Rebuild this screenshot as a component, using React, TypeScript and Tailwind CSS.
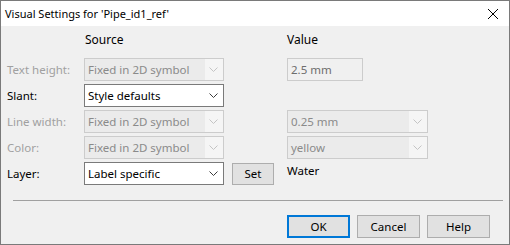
import React from 'react';

const font = "font-['Segoe_UI','Noto_Sans',sans-serif]";

function Chevron({ disabled }: { disabled?: boolean }) {
    return (
        <svg width="9" height="5" viewBox="0 0 9 5" className="shrink-0">
            <path d="M0.5 0.5 L4.5 4.5 L8.5 0.5" fill="none" stroke={disabled ? '#c4c4c4' : '#3c3c3c'} strokeWidth="1" />
        </svg>
    );
}

function Select({ value, disabled }: { value: string; disabled?: boolean }) {
    if (disabled) {
        return (
            <div className="flex h-[23px] w-full border border-[#cccccc] bg-[#f5f5f5]">
                <div className="flex flex-1 items-center bg-[#ebebeb] pl-[3px] text-[#8a8a8a]">{value}</div>
                <div className="flex w-[18px] items-center justify-center pr-[1px]">
                    <Chevron disabled />
                </div>
            </div>
        );
    }
    return (
        <div className="flex h-[23px] w-full items-center border border-[#7a7a7a] bg-white">
            <div className="flex-1 pl-[3px] text-black">{value}</div>
            <div className="flex w-[18px] items-center justify-center pr-[1px]">
                <Chevron />
            </div>
        </div>
    );
}

function Label({ text, disabled }: { text: string; disabled?: boolean }) {
    return <div className={disabled ? 'text-[#a0a0a0]' : 'text-black'}>{text}</div>;
}

function DialogButton({ label, primary }: { label: string; primary?: boolean }) {
    return (
        <button
            className={
                'flex h-[23px] w-[63px] items-center justify-center bg-[#e1e1e1] text-black ' +
                (primary ? 'border-2 border-[#0078d7]' : 'border border-[#adadad]')
            }
        >
            {label}
        </button>
    );
}

export default function App() {
    return (
        <div className={`flex h-[245px] w-[510px] flex-col border border-[#7a7a7a] bg-[#f0f0f0] text-[11.5px] leading-none ${font}`}>
            <div className="flex h-[25px] items-center justify-between bg-white pl-[4px] pr-[11px]">
                <span className="text-[11px] text-black">Visual Settings for 'Pipe_id1_ref'</span>
                <svg width="10" height="10" viewBox="0 0 10 10">
                    <path d="M0 0 L10 10 M10 0 L0 10" stroke="#000" strokeWidth="1" />
                </svg>
            </div>

            <div className="flex flex-col pl-[6px] pt-[5px]">
                <div className="grid h-[18px] grid-cols-[77px_140px_63px_141px] items-center text-[12px] text-black">
                    <div />
                    <div className="pl-[1px]">Source</div>
                    <div />
                    <div>Value</div>
                </div>

                <div className="mt-[9px] flex flex-col gap-[3px]">
                    <div className="grid h-[23px] grid-cols-[77px_140px_63px_141px] items-center">
                        <Label text="Text height:" disabled />
                        <Select value="Fixed in 2D symbol" disabled />
                        <div />
                        <div className="flex h-[23px] w-[76px] items-center border border-[#cccccc] bg-[#f0f0f0] pl-[3px] text-[#6d6d6d]">
                            2.5 mm
                        </div>
                    </div>
                    <div className="grid h-[23px] grid-cols-[77px_140px_63px_141px] items-center">
                        <Label text="Slant:" />
                        <Select value="Style defaults" />
                        <div />
                        <div />
                    </div>
                    <div className="grid h-[23px] grid-cols-[77px_140px_63px_141px] items-center">
                        <Label text="Line width:" disabled />
                        <Select value="Fixed in 2D symbol" disabled />
                        <div />
                        <Select value="0.25 mm" disabled />
                    </div>
                    <div className="grid h-[23px] grid-cols-[77px_140px_63px_141px] items-center">
                        <Label text="Color:" disabled />
                        <Select value="Fixed in 2D symbol" disabled />
                        <div />
                        <Select value="yellow" disabled />
                    </div>
                    <div className="grid h-[23px] grid-cols-[77px_140px_63px_141px] items-center">
                        <Label text="Layer:" />
                        <Select value="Label specific" />
                        <div className="pl-[8px]">
                            <button className="flex h-[22px] w-[42px] items-center justify-center border border-[#adadad] bg-[#e1e1e1] text-black">
                                Set
                            </button>
                        </div>
                        <div className="-mt-[6px] text-black">Water</div>
                    </div>
                </div>
            </div>

            <div className="ml-[12px] mt-[15px] h-px w-[490px] bg-[#a0a0a0]" />

            <div className="mt-[14px] flex justify-end gap-[7px] pr-[19px]">
                <DialogButton label="OK" primary />
                <DialogButton label="Cancel" />
                <DialogButton label="Help" />
            </div>
        </div>
    );
}
